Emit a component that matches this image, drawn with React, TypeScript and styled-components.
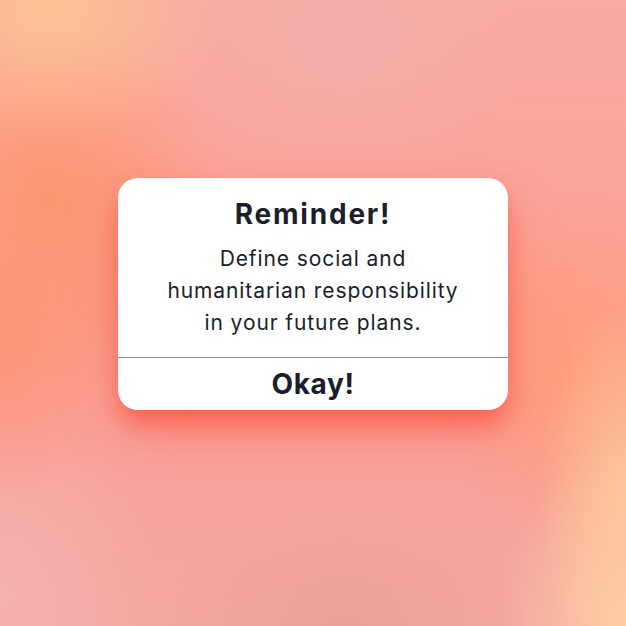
import React from "react";
import styled, { createGlobalStyle } from "styled-components";

const ink = `#1b1e2c`;

const GlobalStyle = createGlobalStyle`
  html, body {
    margin: 0;
    padding: 0;
  }
  body {
    font-family: "Inter", "Noto Sans", sans-serif;
  }
`;

const Backdrop = styled.main`
  width: 626px;
  height: 626px;
  box-sizing: border-box;
  padding-bottom: 38px;
  display: flex;
  align-items: center;
  justify-content: center;
  overflow: hidden;
  background:
    radial-gradient(ellipse 28% 22% at 8% 2%, #fdc196 0%, rgba(253, 193, 150, 0) 100%),
    radial-gradient(ellipse 20% 30% at 100% 100%, #fdcda3 0%, rgba(253, 205, 163, 0) 100%),
    radial-gradient(ellipse 14% 30% at 100% 78%, #fdc29b 0%, rgba(253, 194, 155, 0) 100%),
    radial-gradient(ellipse 28% 30% at 8% 32%, #fd9470 0%, rgba(253, 148, 112, 0) 100%),
    radial-gradient(ellipse 22% 25% at 0% 55%, #fc9479 0%, rgba(252, 148, 121, 0) 100%),
    radial-gradient(ellipse 22% 30% at 92% 60%, #fe9c7c 0%, rgba(254, 156, 124, 0) 100%),
    radial-gradient(ellipse 30% 20% at 55% 100%, #eca095 0%, rgba(236, 160, 149, 0) 100%),
    radial-gradient(ellipse 25% 30% at 0% 95%, #f6b2b0 0%, rgba(246, 178, 176, 0) 100%),
    radial-gradient(ellipse 30% 25% at 55% 5%, #f4adab 0%, rgba(244, 173, 171, 0) 100%),
    linear-gradient(180deg, #f9aba0 0%, #fba096 50%, #f4a7a1 100%);
`;

const Dialog = styled.section`
  width: 390px;
  background: #ffffff;
  border-radius: 20px;
  box-shadow: 0 16px 26px -4px rgba(255, 74, 54, 0.75), 0 30px 60px rgba(250, 100, 80, 0.3);
  display: flex;
  flex-direction: column;
  overflow: hidden;
  color: ${ink};
  text-align: center;
`;

const Body = styled.div`
  padding: 20px 20px 18px;
  display: flex;
  flex-direction: column;
  gap: 13px;
  border-bottom: 1px solid #8e8e94;
`;

const Title = styled.h2`
  margin: 0;
  font-size: 28px;
  line-height: 32px;
  font-weight: 700;
  letter-spacing: 1.8px;
`;

const Message = styled.p`
  margin: 0;
  font-size: 21px;
  line-height: 32px;
  font-weight: 400;
  letter-spacing: 0.9px;
`;

const Action = styled.button`
  height: 52px;
  border: 0;
  background: transparent;
  font-family: inherit;
  font-size: 28px;
  font-weight: 700;
  letter-spacing: 0.6px;
  color: ${ink};
  cursor: pointer;
`;

export default function App() {
  return (
    <>
      <GlobalStyle />
      <Backdrop>
        <Dialog>
          <Body>
            <Title>Reminder!</Title>
            <Message>
              Define social and
              <br />
              humanitarian responsibility
              <br />
              in your future plans.
            </Message>
          </Body>
          <Action>Okay!</Action>
        </Dialog>
      </Backdrop>
    </>
  );
}
